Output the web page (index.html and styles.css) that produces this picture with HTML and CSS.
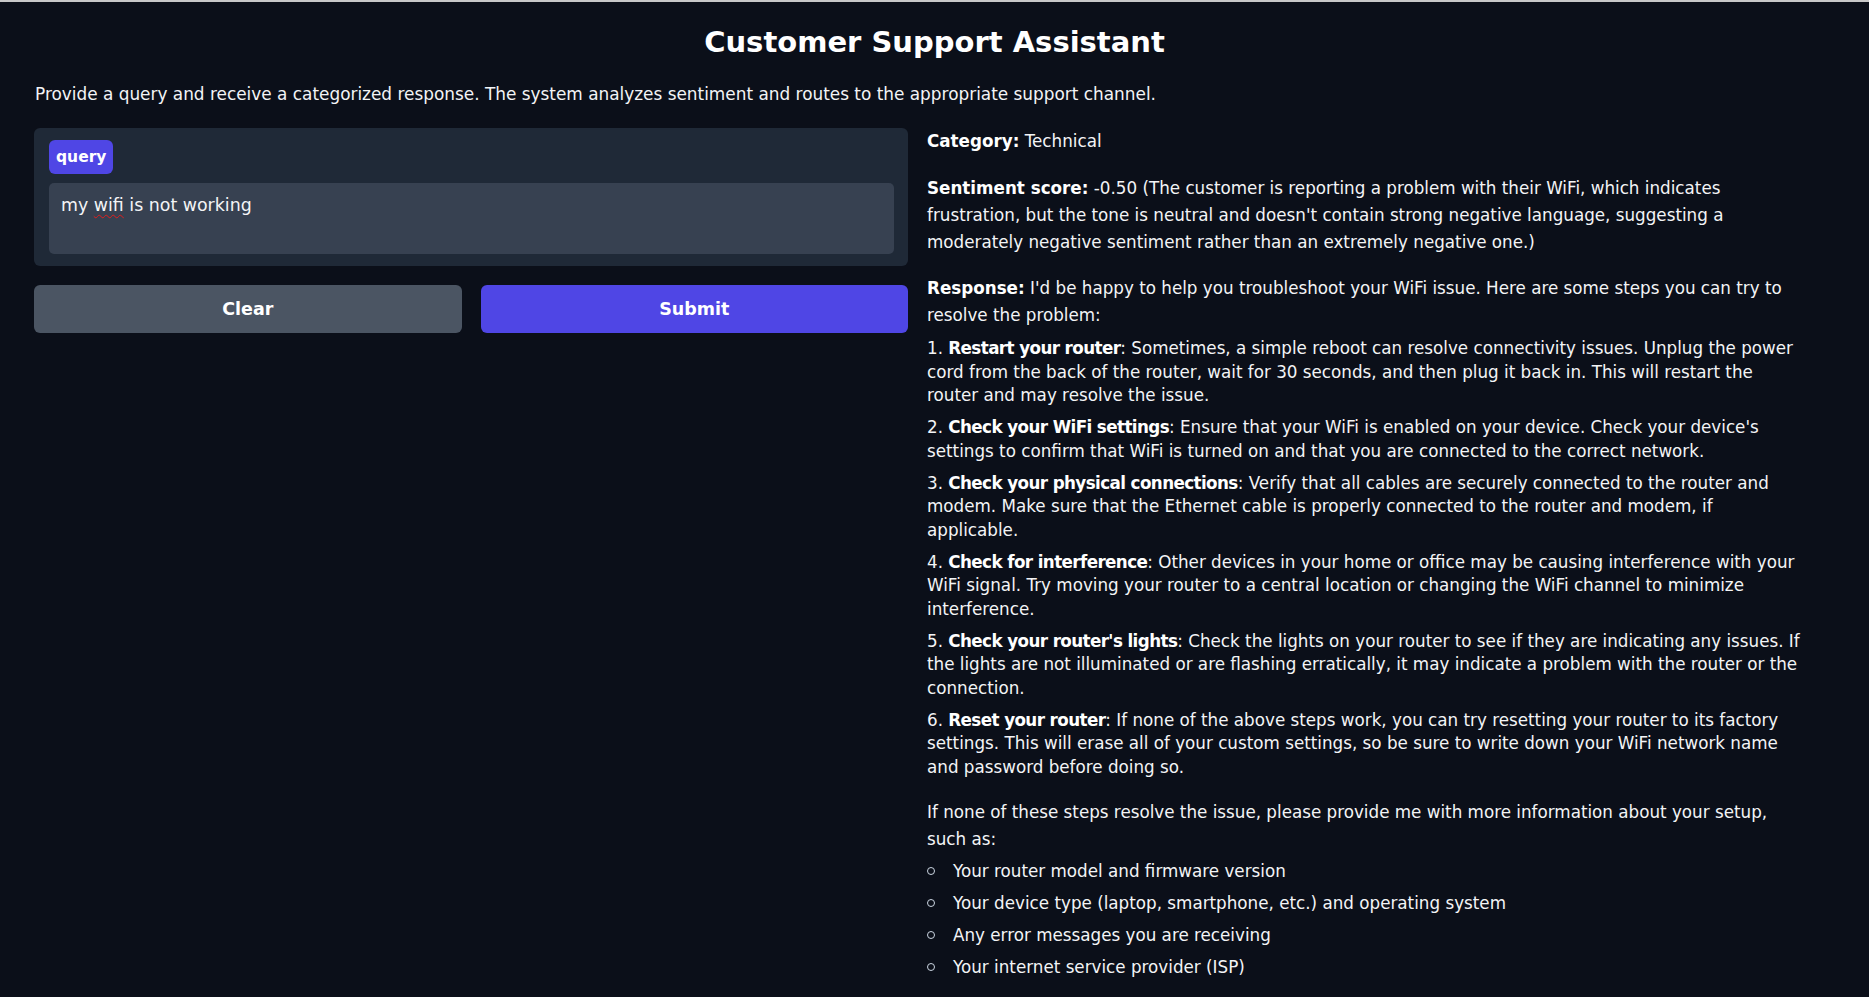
FILE: index.html
```html
<!DOCTYPE html>
<html lang="en">
<head>
<meta charset="utf-8">
<title>Customer Support Assistant</title>
<link rel="stylesheet" href="styles.css">
</head>
<body>
<div class="topline"></div>
<main class="app">
  <h1 class="title">Customer Support Assistant</h1>
  <p class="desc">Provide a query and receive a categorized response. The system analyzes sentiment and routes to the appropriate support channel.</p>
  <div class="cols">
    <section class="left">
      <div class="panel">
        <span class="label">query</span>
        <div class="textbox">my <span class="spell">wifi</span> is not working</div>
      </div>
      <div class="btns">
        <button class="btn btn-clear">Clear</button>
        <button class="btn btn-submit">Submit</button>
      </div>
    </section>
    <section class="right">
      <p class="para"><strong>Category:</strong> Technical</p>
      <p class="para"><strong>Sentiment score:</strong> -0.50 (The customer is reporting a problem with their WiFi, which indicates frustration, but the tone is neutral and doesn't contain strong negative language, suggesting a moderately negative sentiment rather than an extremely negative one.)</p>
      <p class="para"><strong>Response:</strong> I'd be happy to help you troubleshoot your WiFi issue. Here are some steps you can try to resolve the problem:</p>
      <div class="steps">
        <p class="step">1. <strong>Restart your router</strong>: Sometimes, a simple reboot can resolve connectivity issues. Unplug the power cord from the back of the router, wait for 30 seconds, and then plug it back in. This will restart the router and may resolve the issue.</p>
        <p class="step">2. <strong>Check your WiFi settings</strong>: Ensure that your WiFi is enabled on your device. Check your device's settings to confirm that WiFi is turned on and that you are connected to the correct network.</p>
        <p class="step">3. <strong>Check your physical connections</strong>: Verify that all cables are securely connected to the router and modem. Make sure that the Ethernet cable is properly connected to the router and modem, if applicable.</p>
        <p class="step">4. <strong>Check for interference</strong>: Other devices in your home or office may be causing interference with your WiFi signal. Try moving your router to a central location or changing the WiFi channel to minimize interference.</p>
        <p class="step">5. <strong>Check your router's lights</strong>: Check the lights on your router to see if they are indicating any issues. If the lights are not illuminated or are flashing erratically, it may indicate a problem with the router or the connection.</p>
        <p class="step">6. <strong>Reset your router</strong>: If none of the above steps work, you can try resetting your router to its factory settings. This will erase all of your custom settings, so be sure to write down your WiFi network name and password before doing so.</p>
      </div>
      <p class="para">If none of these steps resolve the issue, please provide me with more information about your setup, such as:</p>
      <ul class="bullets">
        <li>Your router model and firmware version</li>
        <li>Your device type (laptop, smartphone, etc.) and operating system</li>
        <li>Any error messages you are receiving</li>
        <li>Your internet service provider (ISP)</li>
      </ul>
    </section>
  </div>
</main>
</body>
</html>
```

FILE: styles.css
```css
* { box-sizing: border-box; }

html, body {
  margin: 0;
  padding: 0;
  background: #0b0f19;
}

body {
  font-family: "DejaVu Sans", "Noto Sans", sans-serif;
  color: #f3f4f6;
  font-size: 17px;
  min-height: 997px;
}

.topline {
  height: 2px;
  background: #c8c8c8;
}

.app {
  padding: 22px 34px 0 34px;
}

.title {
  margin: 0;
  text-align: center;
  font-size: 29px;
  line-height: 36px;
  font-weight: 700;
  color: #ffffff;
}

.desc {
  margin: 22px 0 22px 1px;
  font-size: 16.9px;
  line-height: 24px;
  color: #f3f4f6;
}

.cols {
  display: grid;
  grid-template-columns: 874px 874px;
  column-gap: 19px;
  align-items: start;
}

.panel {
  background: #1f2937;
  border-radius: 6px;
  padding: 12px 14px 12px 15px;
  display: flex;
  flex-direction: column;
  align-items: flex-start;
  gap: 9px;
}

.label {
  display: inline-block;
  background: #4f46e5;
  color: #ffffff;
  font-weight: 700;
  font-size: 15.5px;
  height: 34px;
  line-height: 34px;
  padding: 0 7px;
  border-radius: 6px;
}

.textbox {
  align-self: stretch;
  background: #374151;
  border-radius: 5px;
  height: 71px;
  padding: 10px 12px;
  font-size: 17.4px;
  line-height: 24px;
  color: #f3f4f6;
}

.spell {
  text-decoration: underline wavy #e11d1d;
  text-decoration-thickness: 1px;
  text-underline-offset: 3px;
}

.btns {
  display: grid;
  grid-template-columns: 1fr 1fr;
  gap: 19px;
  margin-top: 19px;
}

.btn {
  height: 48px;
  border: none;
  border-radius: 6px;
  font-family: inherit;
  font-weight: 700;
  font-size: 17.5px;
  color: #ffffff;
  cursor: pointer;
}

.btn-clear { background: #4b5563; }
.btn-submit { background: #4f46e5; }

.right {
  font-size: 16.75px;
  color: #f3f4f6;
}

.right strong {
  color: #ffffff;
  font-weight: 700;
}

.para {
  margin: 0 0 19.5px 0;
  line-height: 27px;
}

.steps {
  margin-top: -11.5px;
  margin-bottom: 20px;
}

.step {
  margin: 8.5px 0 0 0;
  line-height: 23.5px;
}

.step strong {
  letter-spacing: -0.6px;
}

.bullets {
  margin: -15px 0 0 0;
  padding-left: 0;
  list-style: none;
}

.bullets li {
  display: flex;
  align-items: center;
  line-height: 27px;
  margin-bottom: 5px;
}

.bullets li::before {
  content: "";
  flex: none;
  width: 6px;
  height: 6px;
  border: 1px solid #cbd5e1;
  border-radius: 50%;
  margin-right: 18px;
}
```
